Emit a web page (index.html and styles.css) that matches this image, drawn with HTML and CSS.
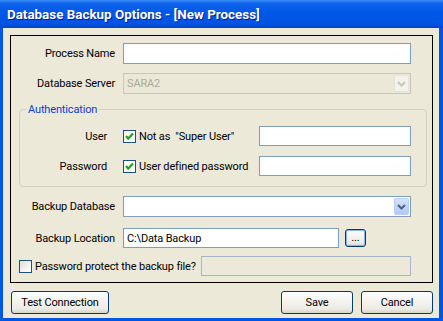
FILE: index.html
```html
<!DOCTYPE html>
<html>
<head>
    <title>Database Backup Options</title>
    <link rel="stylesheet" href="styles.css">
</head>
<body>
    <div class="window">
        <div class="titlebar">
            <span class="title">Database Backup Options - [New Process]</span>
        </div>
        <div class="client">
            <div class="panel">
                <div class="row row-name">
                    <label class="lbl" for="process_name">Process Name</label>
                    <input type="text" id="process_name" class="field wide">
                </div>

                <div class="row row-server">
                    <span class="lbl">Database Server</span>
                    <div class="combo wide disabled">
                        <span class="combo-text">SARA2</span>
                        <span class="combo-btn">
                            <svg width="9" height="6" viewBox="0 0 9 6"><path d="M1 1 L4.5 4.5 L8 1" stroke="#c9c6b6" stroke-width="2" fill="none"/></svg>
                        </span>
                    </div>
                </div>

                <fieldset class="group">
                    <legend>Authentication</legend>
                    <div class="row row-user">
                        <span class="lbl lbl-sm">User</span>
                        <label class="check">
                            <span class="box checked">
                                <svg width="11" height="11" viewBox="0 0 11 11"><path d="M2 5 L4.2 7.5 L9 2.5" stroke="#21a121" stroke-width="2.2" fill="none"/></svg>
                            </span>
                            Not as&nbsp; "Super User"
                        </label>
                        <input type="text" class="field short">
                    </div>
                    <div class="row row-pass">
                        <span class="lbl lbl-sm">Password</span>
                        <label class="check">
                            <span class="box checked">
                                <svg width="11" height="11" viewBox="0 0 11 11"><path d="M2 5 L4.2 7.5 L9 2.5" stroke="#21a121" stroke-width="2.2" fill="none"/></svg>
                            </span>
                            User defined password
                        </label>
                        <input type="text" class="field short">
                    </div>
                </fieldset>

                <div class="row row-db">
                    <span class="lbl">Backup Database</span>
                    <div class="combo wide">
                        <span class="combo-text"></span>
                        <span class="combo-btn">
                            <svg width="9" height="6" viewBox="0 0 9 6"><path d="M1 1 L4.5 4.5 L8 1" stroke="#4d6185" stroke-width="2" fill="none"/></svg>
                        </span>
                    </div>
                </div>

                <div class="row row-loc">
                    <label class="lbl" for="backup_location">Backup Location</label>
                    <input type="text" id="backup_location" class="field loc" value="C:\Data Backup">
                    <button class="btn browse">...</button>
                </div>

                <div class="row row-protect">
                    <label class="check">
                        <span class="box"></span>
                        Password protect the backup file?
                    </label>
                    <input type="text" class="field protect" disabled>
                </div>
            </div>

            <div class="buttons">
                <button class="btn btn-test">Test Connection</button>
                <div class="spacer"></div>
                <button class="btn btn-save">Save</button>
                <button class="btn btn-cancel">Cancel</button>
            </div>
        </div>
    </div>
</body>
</html>
```

FILE: styles.css
```css
body {
    margin: 0;
    font-family: Roboto, "Liberation Sans", Arial, sans-serif;
    font-size: 11px;
    letter-spacing: -0.15px;
    color: #000;
    background-color: #0055e5;
}

.window {
    width: 443px;
    height: 321px;
    display: flex;
    flex-direction: column;
    background-color: #0055e5;
    box-sizing: border-box;
}

.titlebar {
    height: 28px;
    display: flex;
    align-items: center;
    padding-left: 7px;
    background: linear-gradient(to bottom, #3b8cf7 0%, #0f63ea 12%, #0058e6 45%, #0054e3 85%, #0045c6 100%);
}

.title {
    color: #fff;
    font-weight: bold;
    font-size: 13.4px;
    letter-spacing: 0;
    text-shadow: 1px 1px #0a1a8a;
}

.client {
    flex: 1;
    margin: 0 4px 3px 3px;
    padding: 7px 6px 0 7px;
    background-color: #ece9d8;
}

.panel {
    height: 248px;
    box-sizing: border-box;
    border: 1px solid #000;
    padding: 0 21px 0 0;
}

.row {
    display: flex;
    align-items: center;
}

.row-name {
    margin-top: 7px;
    height: 21px;
}

.row-server {
    margin-top: 9px;
    height: 21px;
}

.lbl {
    width: 104px;
    margin-right: 8px;
    text-align: right;
    flex-shrink: 0;
}

.lbl-sm {
    width: 87px;
    margin-right: 16px;
}

.field {
    appearance: none;
    box-sizing: border-box;
    height: 100%;
    margin: 0;
    padding: 0 4px;
    border: 1px solid #7f9db9;
    background-color: #fff;
    font-family: inherit;
    font-size: 11px;
    letter-spacing: inherit;
    color: #000;
    outline: none;
}

.wide {
    width: 288px;
}

.short {
    width: 152px;
}

.combo {
    box-sizing: border-box;
    height: 100%;
    display: flex;
    align-items: center;
    justify-content: space-between;
    border: 1px solid #7f9db9;
    background-color: #fff;
    padding: 0 1px 0 3px;
}

.combo.disabled {
    border-color: #c9c7ba;
    background-color: #ebe8d7;
    color: #aca899;
}

.combo-btn {
    width: 15px;
    height: 17px;
    box-sizing: border-box;
    display: flex;
    align-items: center;
    justify-content: center;
    border: 1px solid #b9cdf6;
    border-radius: 2px;
    background: linear-gradient(to bottom, #d6e3fd 0%, #c1d4fb 50%, #b2c8f7 100%);
}

.combo.disabled .combo-btn {
    border-color: #e6e4da;
    background: #f3f2ec;
}

.group {
    margin: 9px 0 0 8px;
    width: 408px;
    box-sizing: border-box;
    padding: 0 0 10px 0;
    border: 1px solid #d0d0bf;
    border-radius: 4px;
}

.group legend {
    margin-left: 6px;
    padding: 0 2px;
    color: #0046d5;
    font-size: 11px;
    line-height: 13px;
}

.row-user {
    margin-top: 10px;
    height: 20px;
}

.row-pass {
    margin-top: 10px;
    height: 20px;
}

.check {
    display: flex;
    align-items: center;
    gap: 3px;
    white-space: nowrap;
}

.row-user .check,
.row-pass .check {
    width: 136px;
}

.box {
    width: 13px;
    height: 13px;
    box-sizing: border-box;
    display: flex;
    align-items: center;
    justify-content: center;
    border: 1px solid #1c5180;
    background: linear-gradient(135deg, #dcdcd5 0%, #f4f4f1 60%, #fff 100%);
}

.box.checked {
    background: #fff;
}

.row-db {
    margin-top: 9px;
    height: 21px;
}

.row-loc {
    margin-top: 11px;
    height: 20px;
}

.loc {
    width: 216px;
    padding-left: 3px;
}

.row-protect {
    margin-top: 8px;
    height: 20px;
    padding-left: 8px;
}

.protect {
    margin-left: auto;
    width: 210px;
    border-color: #a5b6c8;
    background-color: #ece9d8;
}

.btn {
    box-sizing: border-box;
    height: 23px;
    margin: 0;
    padding: 0;
    border: 1px solid #003c74;
    border-radius: 3px;
    background: linear-gradient(to bottom, #ffffff 0%, #f5f4ef 40%, #ecebe5 80%, #d8d3c6 100%);
    font-family: inherit;
    font-size: 11px;
    letter-spacing: inherit;
    color: #000;
    cursor: pointer;
}

.browse {
    width: 21px;
    height: 18px;
    margin-left: 6px;
    line-height: 12px;
    box-shadow: inset 0 0 0 1px #8fb1ee;
}

.buttons {
    display: flex;
    margin-top: 8px;
    padding-left: 1px;
}

.spacer {
    flex: 1;
}

.btn-test {
    width: 98px;
}

.btn-save {
    width: 72px;
}

.btn-cancel {
    width: 72px;
    margin-left: 8px;
}
```
